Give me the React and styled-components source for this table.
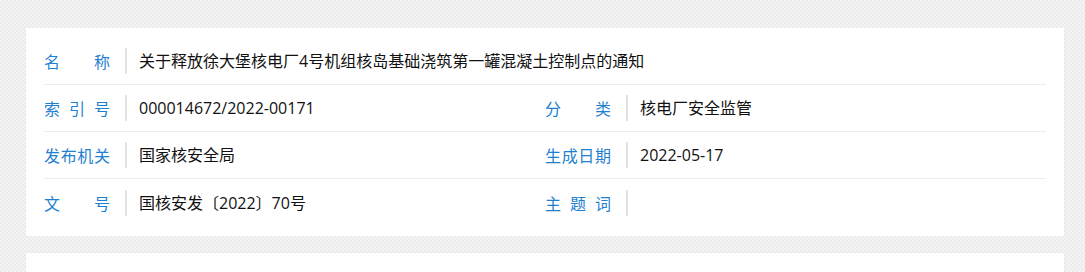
import React from 'react';
import styled, { createGlobalStyle } from 'styled-components';

const GlobalStyle = createGlobalStyle`
  html, body {
    margin: 0;
    padding: 0;
  }
  body {
    font-family: "Open Sans", "Noto Sans CJK SC", sans-serif;
    background-color: #f1f1f1;
    background-image: repeating-conic-gradient(#ececec 0 25%, #f4f4f4 0 50%);
    background-size: 4px 4px;
  }
`;

const Page = styled.div`
  padding: 28px 21px 0 26px;
  height: 272px;
  box-sizing: border-box;
  overflow: hidden;
`;

const Card = styled.section`
  background: #ffffff;
  padding: 10px 18px;
  margin-bottom: 17px;
  box-shadow: 0 0 2px rgba(0, 0, 0, 0.04);
  min-height: ${(p) => (p.$empty ? '40px' : 'auto')};
`;

const Row = styled.div`
  display: grid;
  grid-template-columns: 1fr 1fr;
  height: 47px;
  border-bottom: ${(p) => (p.$last ? 'none' : '1px solid #ececec')};
  box-sizing: border-box;
`;

const Field = styled.div`
  display: flex;
  align-items: center;
  grid-column: ${(p) => (p.$wide ? '1 / span 2' : 'auto')};
`;

const Label = styled.span`
  width: 66px;
  flex-shrink: 0;
  font-size: 16px;
  color: #1f7fd0;
  text-align: justify;
  text-align-last: justify;
  margin-right: 15px;
  white-space: nowrap;
`;

const Value = styled.span`
  border-left: 2px solid #e2e2e2;
  padding-left: 12px;
  font-size: 16px;
  color: #111;
  line-height: 26px;
  min-height: 26px;
  white-space: nowrap;
`;

const rows = [
  [{ label: '名称', value: '关于释放徐大堡核电厂4号机组核岛基础浇筑第一罐混凝土控制点的通知', wide: true }],
  [
    { label: '索引号', value: '000014672/2022-00171' },
    { label: '分类', value: '核电厂安全监管' },
  ],
  [
    { label: '发布机关', value: '国家核安全局' },
    { label: '生成日期', value: '2022-05-17' },
  ],
  [
    { label: '文号', value: '国核安发〔2022〕70号' },
    { label: '主题词', value: '' },
  ],
];

// short labels get spread across the label width, four-char ones fill it already
const FieldLabel = ({ text }) => {
  const chars = text.split('');
  return <Label>{chars.length < 4 ? chars.join(' ') : text}</Label>;
};

export default function App() {
  return (
    <>
      <GlobalStyle />
      <Page>
        <Card>
          {rows.map((row, i) => (
            <Row key={i} $last={i === rows.length - 1}>
              {row.map((f) => (
                <Field key={f.label} $wide={f.wide}>
                  <FieldLabel text={f.label} />
                  <Value>{f.value}</Value>
                </Field>
              ))}
            </Row>
          ))}
        </Card>
        <Card $empty />
      </Page>
    </>
  );
}
